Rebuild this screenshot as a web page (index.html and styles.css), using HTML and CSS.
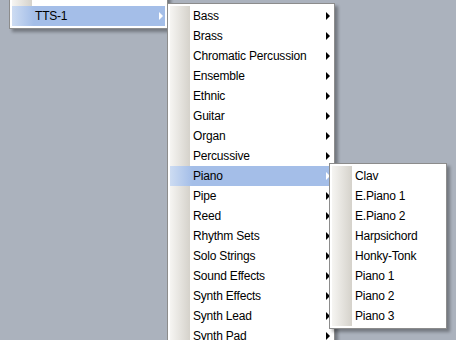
FILE: index.html
```html
<!DOCTYPE html>
<html>
    <head>
        <meta charset="UTF-8" />
        <title>TTS-1 Instruments</title>
        <link rel="stylesheet" href="styles.css">
    </head>
    <body>
        <ul class="menu" id="rootMenu">
            <li class="item">&nbsp;</li>
            <li class="item sub open">TTS-1</li>
        </ul>

        <ul class="menu" id="groupMenu">
            <li class="item sub">Bass</li>
            <li class="item sub">Brass</li>
            <li class="item sub">Chromatic Percussion</li>
            <li class="item sub">Ensemble</li>
            <li class="item sub">Ethnic</li>
            <li class="item sub">Guitar</li>
            <li class="item sub">Organ</li>
            <li class="item sub">Percussive</li>
            <li class="item sub open">Piano</li>
            <li class="item sub">Pipe</li>
            <li class="item sub">Reed</li>
            <li class="item sub">Rhythm Sets</li>
            <li class="item sub">Solo Strings</li>
            <li class="item sub">Sound Effects</li>
            <li class="item sub">Synth Effects</li>
            <li class="item sub">Synth Lead</li>
            <li class="item sub">Synth Pad</li>
        </ul>

        <ul class="menu" id="patchMenu">
            <li class="item">Clav</li>
            <li class="item">E.Piano 1</li>
            <li class="item">E.Piano 2</li>
            <li class="item">Harpsichord</li>
            <li class="item">Honky-Tonk</li>
            <li class="item">Piano 1</li>
            <li class="item">Piano 2</li>
            <li class="item">Piano 3</li>
        </ul>
    </body>
</html>
```
FILE: styles.css
```css
*,
*::before,
*::after {
    box-sizing: border-box;
}

html,
body {
    margin: 0;
    padding: 0;
    height: 100%;
    overflow: hidden;
    background: #abb2bd;
    font-family: "Liberation Sans", Arial, sans-serif;
    font-size: 12px;
    letter-spacing: -0.2px;
    color: #000;
}

/* popup menus */
.menu {
    position: absolute;
    margin: 0;
    padding: 2px;
    list-style: none;
    background: #fff;
    border: 1px solid #8c8c8c;
    box-shadow: 3px 3px 3px rgba(0, 0, 0, 0.32);
}

#rootMenu {
    left: 9px;
    top: -17px;
    width: 159px;
    z-index: 1;
}

#groupMenu {
    left: 167px;
    top: 3px;
    width: 168px;
    z-index: 2;
}

#patchMenu {
    left: 329px;
    top: 163px;
    width: 118px;
    z-index: 3;
}

/* rows */
.item {
    position: relative;
    height: 20px;
    line-height: 20px;
    padding-left: 23px;
    white-space: nowrap;
    background: linear-gradient(to right, #f6f5f2, #d5d2cb 20px, #fff 20px);
}

.item.open {
    background: linear-gradient(to right, #cddcf2, #a4bee8 22px);
}

/* submenu arrow */
.sub::after {
    content: "";
    position: absolute;
    right: 2px;
    top: 6px;
    border-left: 4px solid #000;
    border-top: 4px solid transparent;
    border-bottom: 4px solid transparent;
}

.sub.open::after {
    border-left-color: #fff;
}
```
